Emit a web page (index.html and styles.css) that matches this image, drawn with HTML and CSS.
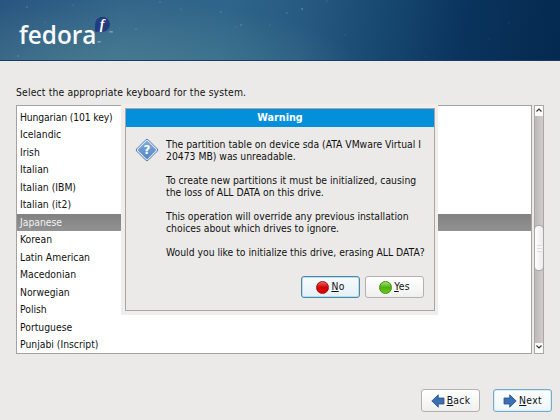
FILE: index.html
```
<!DOCTYPE html>
<html lang="en">
<head>
<meta charset="utf-8">
<title>Fedora installer</title>
<link rel="stylesheet" href="styles.css">
</head>
<body>
<div class="screen">
  <header class="banner">
    <svg class="stars" width="560" height="61" viewBox="0 0 560 61" fill="#a9cbd9">
      <g opacity=".4"><circle cx="27" cy="7" r=".8"/><circle cx="73" cy="5" r=".6"/><circle cx="136" cy="29" r=".7"/><circle cx="160" cy="2" r=".7"/><circle cx="181" cy="9" r=".6"/><circle cx="221" cy="12" r=".8"/><circle cx="241" cy="25" r=".8"/><circle cx="236" cy="27" r=".6"/><circle cx="287" cy="13" r=".7"/><circle cx="302" cy="9" r=".9"/><circle cx="270" cy="25" r=".6"/><circle cx="327" cy="1" r=".6"/><circle cx="345" cy="35" r=".5"/><circle cx="489" cy="39" r=".4"/><circle cx="509" cy="23" r=".4"/><circle cx="425" cy="56" r=".4"/><circle cx="18" cy="56" r=".8"/><circle cx="45" cy="22" r=".5"/></g>
    </svg>
    <svg class="logo" width="120" height="61" viewBox="0 0 120 61">
      <text class="word" x="19" y="44" textLength="77.500" lengthAdjust="spacingAndGlyphs">fedora</text>
      <path d="M95 24.300a7.500 7.500 0 1 1 7.500 7.500H96.500a1.500 1.500 0 0 1-1.500-1.500z" fill="#233c80"/>
      <text class="mark" x="99.800" y="29">f</text>
      <text class="tm" x="96.500" y="45">™</text>
      <text class="tm" x="108.500" y="34.500">™</text>
    </svg>
  </header>
  <main class="content">
    <p class="prompt">Select the appropriate keyboard for the system.</p>
    <div class="picker">
      <ul class="list">
        <li class="tight">Hungarian (101 key)</li><li>Icelandic</li><li>Irish</li><li>Italian</li><li>Italian (IBM)</li><li>Italian (it2)</li><li class="selected">Japanese</li><li>Korean</li><li>Latin American</li><li>Macedonian</li><li>Norwegian</li><li>Polish</li><li>Portuguese</li><li>Punjabi (Inscript)</li>
      </ul>
      <div class="scrollbar">
        <span class="arrow"><svg width="8" height="8" viewBox="0 0 8 8"><path d="M1.500 5.500 4 3l2.500 2.500"/></svg></span>
        <div class="track"><div class="thumb"><i></i></div></div>
        <span class="arrow"><svg width="8" height="8" viewBox="0 0 8 8"><path d="M1.500 2.500 4 5l2.500-2.500"/></svg></span>
      </div>
    </div>
    <nav class="actions">
      <button class="btn"><svg width="14" height="14" viewBox="0 0 14 14"><path class="arr" d="M.8 7 7.300.8V4H13v6H7.300v3.200z"/></svg><span><u>B</u>ack</span></button>
      <button class="btn default"><svg width="14" height="14" viewBox="0 0 14 14"><path class="arr" d="M13.200 7 6.700.8V4H1v6h5.700v3.200z"/></svg><span><u>N</u>ext</span></button>
    </nav>
  </main>
  <section class="dialog" role="dialog">
    <div class="frame">
      <h1>Warning</h1>
      <div class="body">
        <svg class="question" width="24" height="24" viewBox="0 0 24 24">
          <defs><linearGradient id="q" x1="0" y1="0" x2="0" y2="1"><stop offset="0" stop-color="#80a9da"/><stop offset="1" stop-color="#5385c1"/></linearGradient></defs>
          <path d="M10.900 1.700q1.100-1 2.200 0l9.200 9.200q1 1.100 0 2.200l-9.200 9.200q-1.100 1-2.200 0l-9.200-9.200q-1-1.100 0-2.200z" fill="#e3edf8" stroke="#456da3" stroke-width=".9"/>
          <path d="m12 2.600 9.400 9.400-9.400 9.400L2.600 12z" fill="url(#q)"/>
          <text x="12" y="16.300" text-anchor="middle">?</text>
        </svg>
        <div class="message">
          <p>The partition table on device sda (ATA VMware Virtual I<br>20473 MB) was unreadable.</p>
          <p>To create new partitions it must be initialized, causing<br>the loss of ALL DATA on this drive.</p>
          <p>This operation will override any previous installation<br>choices about which drives to ignore.</p>
          <p>Would you like to initialize this drive, erasing ALL DATA?</p>
        </div>
      </div>
      <div class="choices">
        <button class="btn focus"><i class="ball red"></i><span><u>N</u>o</span></button>
        <button class="btn"><i class="ball green"></i><span><u>Y</u>es</span></button>
      </div>
    </div>
  </section>
</div>
</body>
</html>
```
FILE: styles.css
```
* { box-sizing: border-box; }
body { margin: 0; background: #ebeae8; color: #111; font: 10.300px/12px "DejaVu Sans Condensed", "DejaVu Sans", sans-serif; }
p, h1, ul { margin: 0; padding: 0; }
ul { list-style: none; }
button { font: inherit; color: inherit; padding: 0; }
svg { display: block; flex: none; }
.screen { position: relative; width: 560px; height: 420px; overflow: hidden; }
.banner {
  position: relative; height: 61px; border-bottom: 1px solid #193d60;
  background:
    radial-gradient(ellipse 260px 75px at 110px 75px, rgba(92,145,150,.58), rgba(92,145,150,0)),
    linear-gradient(98deg, #295680 0, #33658a 22%, #2f658a 40%, #275a81 54%, #174870 68%, #0a345d 82%, #05294f 100%);
}
.stars { position: absolute; inset: 0; }
.logo { position: relative; }
.word { font: 600 24.500px "Open Sans", sans-serif; fill: #f7fafc; }
.mark { font: italic bold 14px "Liberation Serif", serif; fill: #fff; }
.tm { font: 5px "DejaVu Sans", sans-serif; fill: #d6e2ea; }
.content { height: 359px; padding: 25px 8px 8px 16px; display: flex; flex-direction: column; }
.prompt { height: 19px; white-space: nowrap; letter-spacing: .16px; }
.picker { display: flex; gap: 2px; height: 249px; }
.list { width: 516px; background: #fff; border: 1px solid #a5a3a1; padding: 2.500px 0 0; }
.list li { height: 17.500px; line-height: 17.500px; padding-left: 3px; }
.list .tight { letter-spacing: -.14px; }
.list .selected { color: #f3f3f3; background: linear-gradient(#818181, #929292); }
.scrollbar { width: 10px; display: flex; flex-direction: column; border: 1px solid #aaa7a5; }
.arrow { height: 10px; background: #fafafa; }
.arrow path { fill: none; stroke: #333; stroke-width: 1.100; }
.track { flex: 1; background: linear-gradient(90deg, #bdb8b9, #d2cbcd); padding-top: 109px; }
.thumb { height: 46px; margin: 0 -1px; border: 1px solid #aaa6a6; border-radius: 4px; background: linear-gradient(90deg, #fff, #ececec); display: flex; align-items: center; justify-content: center; }
.thumb i { width: 5px; height: 7px; background: repeating-linear-gradient(#ddd 0 1px, #f8f8f8 1px 3px); }
.actions { display: flex; justify-content: flex-end; gap: 13px; margin-top: auto; }
.btn { width: 59px; height: 23px; display: flex; align-items: center; justify-content: center; gap: 2px; border: 1px solid #b3b0ad; border-radius: 3px; background: linear-gradient(#fff, #f8f8f8 50%, #efefee); }
.btn span { margin-top: -2px; letter-spacing: .3px; }
.btn u { text-underline-offset: 1px; text-decoration-thickness: 1px; }
.default { border-color: #78aac7; box-shadow: inset 0 0 0 1px #d4edf8; background: linear-gradient(#fdfeff, #eef6fa); }
.focus { border-color: #4e86a5; box-shadow: inset 0 0 0 1px #b6dced; background: linear-gradient(#f7fbfd, #e4f0f6); }
.arr { fill: #3c6eb2; stroke: #24508d; stroke-width: .8; stroke-linejoin: round; }
.dialog { position: absolute; left: 121px; top: 104px; width: 317px; height: 211px; background: #efeeed; padding: 4px 3px 4px 4px; }
.frame { height: 203px; border: 1px solid #aaa6a4; background: #ebeae8; display: flex; flex-direction: column; }
h1 { height: 18px; background: #048fda; color: #fff; font: bold 9.600px/18px "DejaVu Sans", sans-serif; text-align: center; }
.body { display: flex; padding: 11px 0 0 9px; gap: 7px; }
.question text { font: bold 12px "DejaVu Sans", sans-serif; fill: #fff; }
.message { display: grid; gap: 12px; white-space: nowrap; }
.choices { display: flex; justify-content: flex-end; gap: 5px; padding: 0 10px; margin-top: auto; margin-bottom: 12px; }
.choices .btn { height: 22px; }
.ball { width: 13px; height: 13px; border-radius: 50%; }
.red { border: 1px solid #a01010; background: linear-gradient(#e86666, #d30000 50%, #e00000); }
.green { border: 1px solid #3c8c10; background: linear-gradient(#a2dd70, #4eb010 50%, #69cd16); }
```
